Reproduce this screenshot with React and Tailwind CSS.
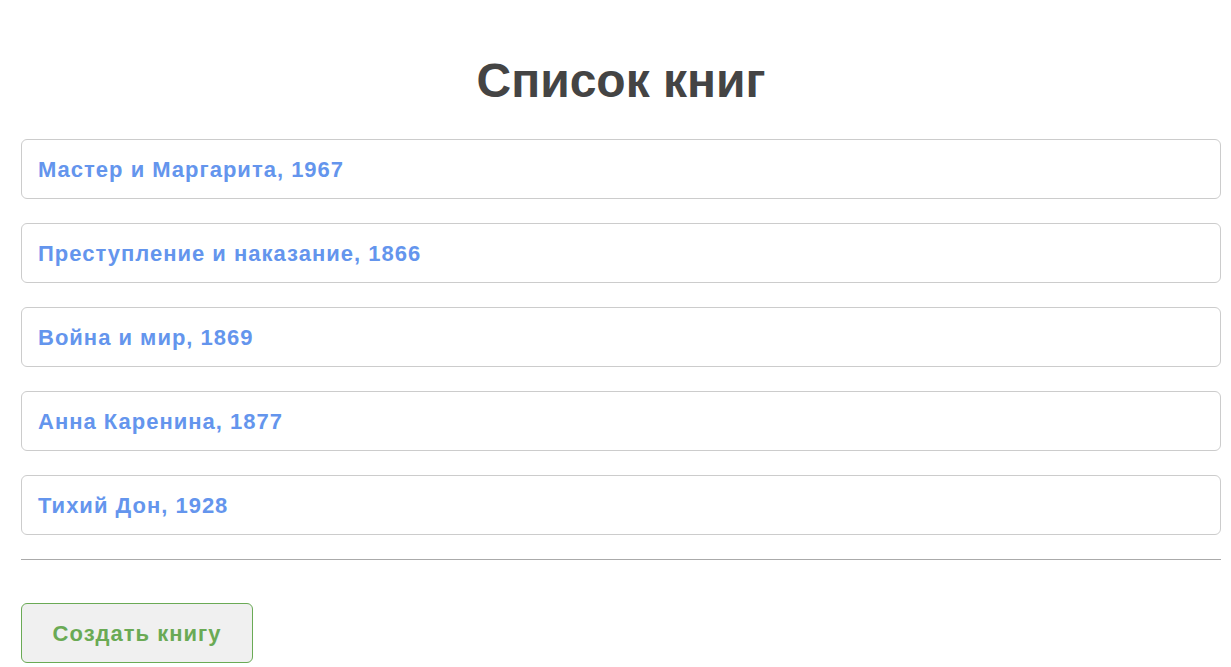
import React from "react";

const books = [
  "Мастер и Маргарита, 1967",
  "Преступление и наказание, 1866",
  "Война и мир, 1869",
  "Анна Каренина, 1877",
  "Тихий Дон, 1928",
];

export default function App() {
  return (
    <div
      className="min-h-screen bg-white pl-[21px] pr-[10px]"
      style={{ fontFamily: '"Liberation Sans", Arial, sans-serif' }}
    >
      <h1 className="pt-[53px] pb-[31px] text-center text-[48px] font-bold leading-[55px] text-[#444444]">
        Список книг
      </h1>
      <div className="flex flex-col gap-[24px]">
        {books.map((b) => (
          <div
            key={b}
            className="flex h-[60px] items-center rounded-[6px] border border-[#cccccc] px-[16px] text-[22px] font-bold tracking-[1px] text-[#6495ed]"
          >
            {b}
          </div>
        ))}
      </div>
      <hr className="mt-[24px] border-t border-[#aaaaaa]" />
      <button className="mt-[43px] h-[60px] w-[232px] rounded-[6px] border border-[#6aaa55] bg-[#f0f0f0] text-[22px] font-bold tracking-[1px] text-[#6aaa55]">
        Создать книгу
      </button>
    </div>
  );
}
